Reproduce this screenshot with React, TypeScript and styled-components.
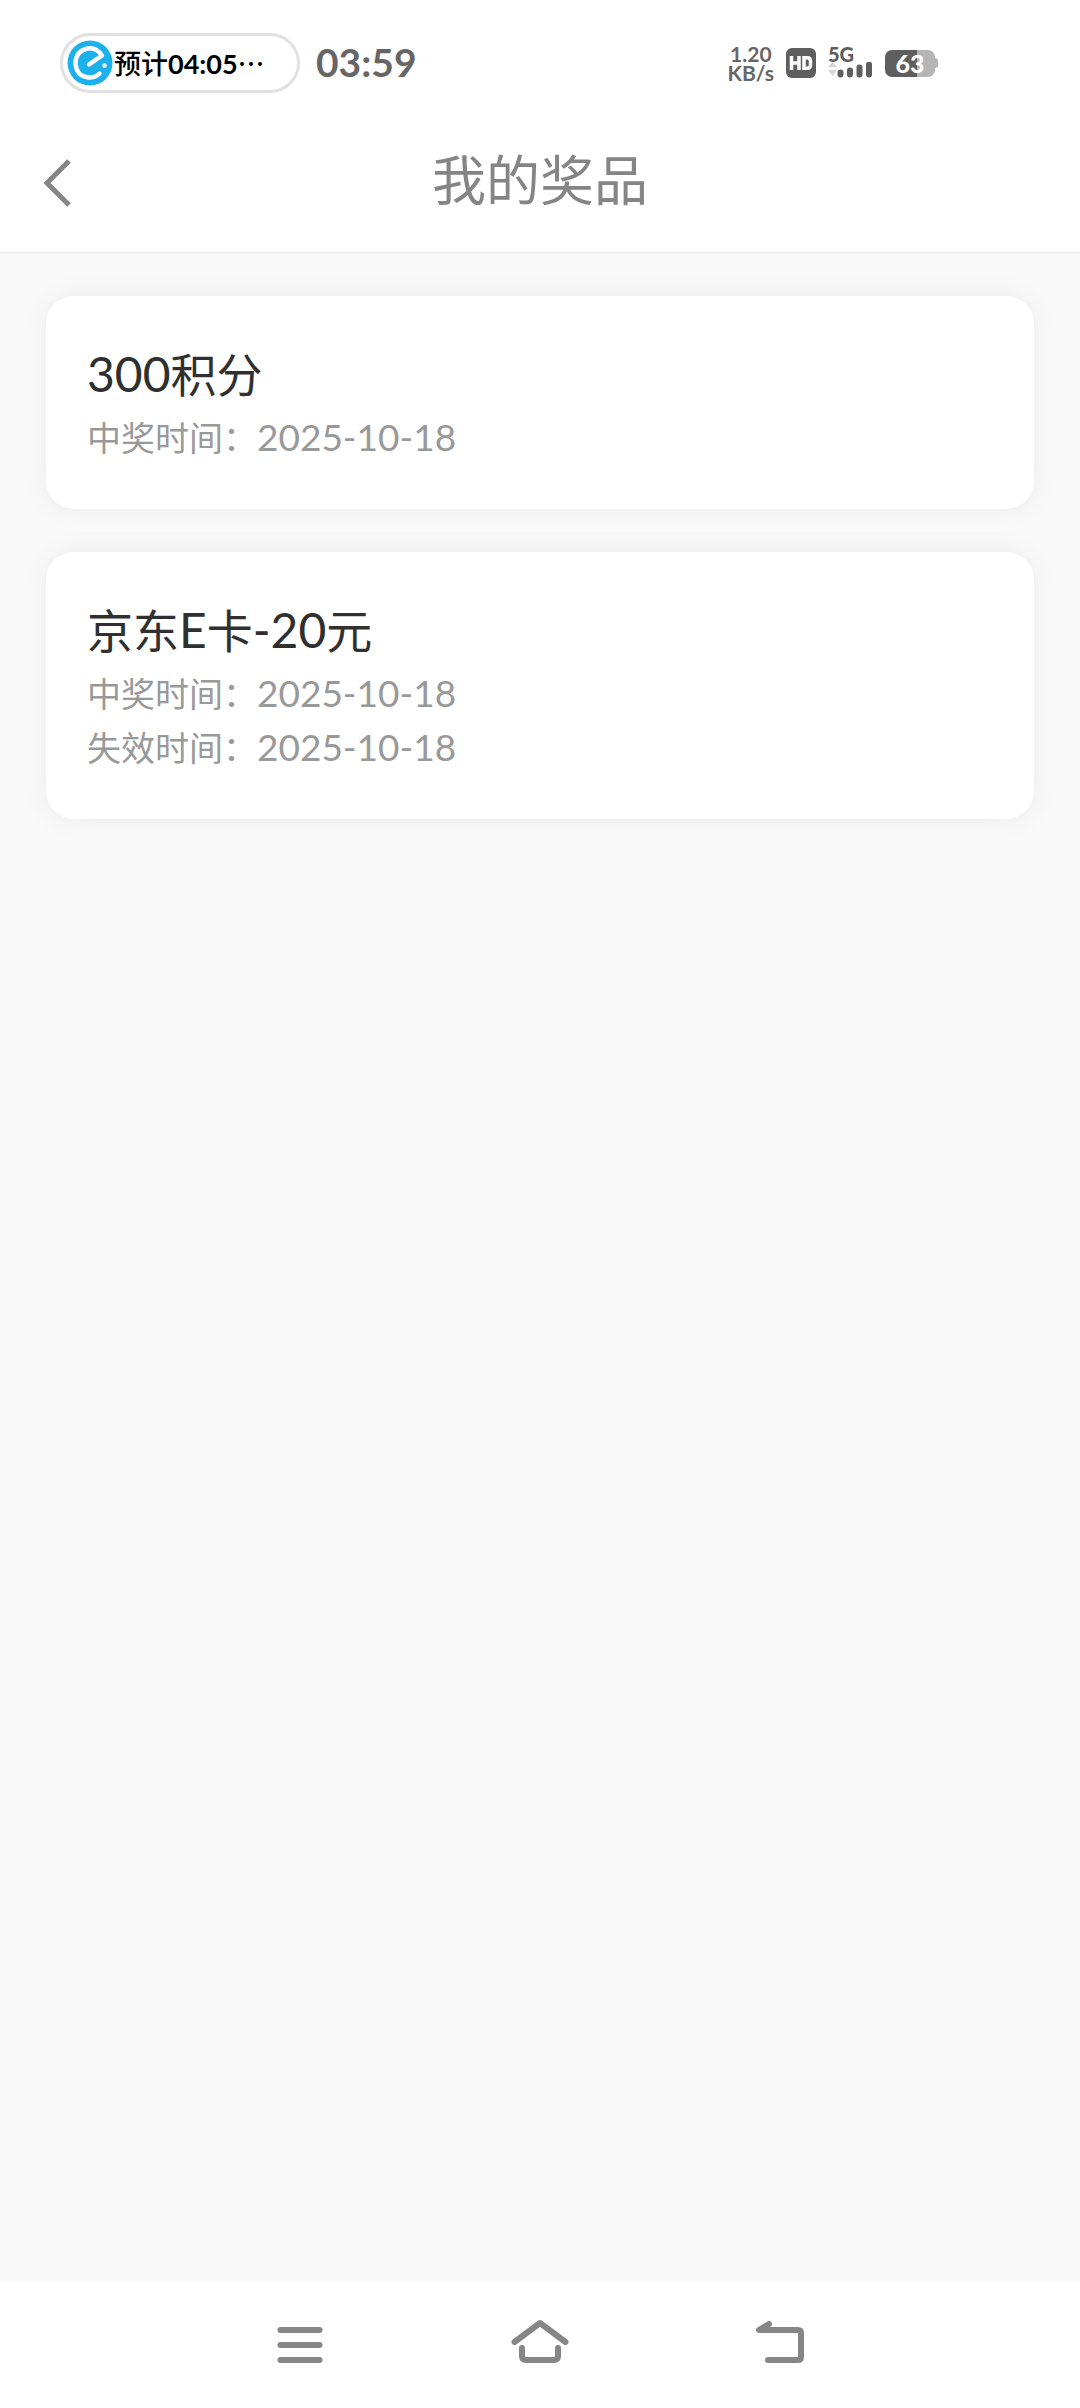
import React from "react";
import styled, { createGlobalStyle } from "styled-components";

const GlobalStyle = createGlobalStyle`
  * { box-sizing: border-box; }
  body {
    margin: 0;
    background: #f9f9f9;
    font-family: "Noto Sans CJK SC", "Noto Sans", sans-serif;
  }
`;

const Page = styled.div`
  min-height: 100vh;
  display: flex;
  flex-direction: column;
`;

const StatusBar = styled.div`
  height: 126px;
  padding: 0 142px 0 60px;
  background: #fff;
  display: flex;
  align-items: center;
  justify-content: space-between;
`;

const StatusGroup = styled.div<{ $gap: number }>`
  display: flex;
  align-items: center;
  gap: ${(p) => p.$gap}px;
`;

const Pill = styled.div`
  height: 60px;
  width: 240px;
  padding-left: 4px;
  border: 3px solid #e2e0e0;
  border-radius: 30px;
  display: flex;
  align-items: center;
  gap: 1px;
  color: #000;
  font-size: 27px;
  line-height: 36px;
  font-weight: 500;
  white-space: nowrap;
`;

const Clock = styled.time`
  padding-bottom: 2px;
  font: 700 39px/46px Lato, sans-serif;
  color: #666;
`;

const Speed = styled.div`
  font: 700 21px/19px Lato, sans-serif;
  text-align: center;
  white-space: pre;
  color: #666;
`;

const Header = styled.header`
  height: 127px;
  padding: 0 39px;
  background: #fff;
  border-bottom: 1px solid #e6e6e6;
  display: grid;
  grid-template-columns: 1fr auto 1fr;
  align-items: start;
`;

const IconButton = styled.button`
  border: 0;
  padding: 0;
  background: none;
  display: flex;
  align-items: center;
  justify-content: center;
  cursor: pointer;
`;

const BackButton = styled(IconButton)`
  width: 36px;
  height: 114px;
`;

const PageTitle = styled.h1`
  margin: 0;
  font-size: 54px;
  line-height: 104px;
  font-weight: 400;
  color: #858585;
`;

const List = styled.main`
  flex: 1;
  padding: 43px 46px;
  display: flex;
  flex-direction: column;
  gap: 43px;
`;

const Card = styled.article`
  padding: 44px 41px 45px;
  border-radius: 28px;
  background: #fff;
  box-shadow: 0 0 28px rgba(0, 0, 0, 0.06);
`;

const Latin = styled.span<{ $size: number; $weight?: number }>`
  font-family: Lato, sans-serif;
  font-size: ${(p) => p.$size}px;
  font-weight: ${(p) => p.$weight ?? 400};
  line-height: 1;
`;

const PrizeName = styled.h2`
  margin: 0 0 6px;
  font-size: 46px;
  line-height: 64px;
  font-weight: 400;
  color: #303030;
`;

const Detail = styled.p`
  margin: 0;
  font-size: 34px;
  line-height: 54px;
  color: #999;
`;

const NavBar = styled.nav`
  height: 126px;
  background: #fff;
  display: flex;
  justify-content: center;
`;

const NavButton = styled(IconButton)`
  width: 240px;
  height: 126px;
`;

const AppLogo = () => (
  <svg width="46" height="46" viewBox="0 0 46 46" fill="none">
    <circle cx="23" cy="23" r="22.5" fill="#1cb0ec" />
    <g stroke="#fff" strokeWidth="4.4" strokeLinecap="round" strokeLinejoin="round">
      <path d="M22 24.5 35 15.500Q29 7 20.500 8.500Q9 11 8.500 23Q9 36 21.500 37.500Q28 38 32.500 33.500" />
      <path d="M37.500 25.500V25.700" />
    </g>
  </svg>
);

const HdIcon = () => (
  <svg width="30" height="30" viewBox="0 0 30 30">
    <rect width="30" height="30" rx="6" fill="#5e5e5e" />
    <g stroke="#fff" strokeWidth="3.500" fill="none">
      <path d="M5.500 8V22M13 8V22M5.500 15H13" />
      <path d="M18 9.700H21.500Q24.500 9.700 24.500 13V17Q24.500 20.300 21.500 20.300H18Z" />
    </g>
  </svg>
);

const SignalWrap = styled.div`
  display: flex;
  flex-direction: column;
  font: 900 20px/16px Lato, sans-serif;
  color: #5e5e5e;
`;

const SignalIcon = () => (
  <svg width="45" height="18" viewBox="0 0 45 18">
    <path d="M0 5 4.500 0 9 5ZM0 8 4.500 14 9 8Z" fill="#d5d5d5" />
    <g stroke="#5e5e5e" strokeWidth="6" strokeLinecap="round">
      <path d="M12.500 10.500V12.500M22 8.500V12.500M31.500 5.500V12.500M41 2.500V12.500" />
    </g>
  </svg>
);

const Battery = styled.div`
  width: 50px;
  height: 27px;
  border-radius: 7px;
  background: linear-gradient(90deg, #5e5e5e 63%, #b5b5b5 63%);
  color: #fff;
  font: 900 25px/27px Lato, sans-serif;
  text-align: center;
`;

const BatteryTip = styled.div`
  width: 3px;
  height: 10px;
  border-radius: 0 3px 3px 0;
  background: #b5b5b5;
`;

const BackIcon = () => (
  <svg width="36" height="50" viewBox="0 0 36 50" fill="none" stroke="#858585" strokeWidth="5">
    <path d="M30 3 8 25 30 47" />
  </svg>
);

const MenuIcon = () => (
  <svg width="60" height="60" viewBox="0 0 60 60" fill="none" stroke="#868686" strokeWidth="6" strokeLinecap="round">
    <path d="M10.500 15H49.500M10.500 30H49.500M10.500 45H49.500" />
  </svg>
);

const HomeIcon = () => (
  <svg width="60" height="60" viewBox="0 0 60 60" fill="none" stroke="#868686" strokeWidth="6" strokeLinecap="round" strokeLinejoin="round">
    <path d="M4.500 27 30 8 55.500 27M12 33V41Q12 45 16 45H44Q48 45 48 41V33" />
  </svg>
);

const ReturnIcon = () => (
  <svg width="60" height="60" viewBox="0 0 60 60" fill="none" stroke="#868686" strokeWidth="6" strokeLinecap="round" strokeLinejoin="round">
    <path d="M19 9 9 15H48Q51 15 51 18V42Q51 45 48 45H18" />
  </svg>
);

type Prize = { name: React.ReactNode; details: { label: string; date: string }[] };

const prizes: Prize[] = [
  {
    name: (
      <>
        <Latin $size={48}>300</Latin>积分
      </>
    ),
    details: [{ label: "中奖时间", date: "2025-10-18" }],
  },
  {
    name: (
      <>
        京东<Latin $size={48}>E</Latin>卡<Latin $size={48}>-20</Latin>元
      </>
    ),
    details: [
      { label: "中奖时间", date: "2025-10-18" },
      { label: "失效时间", date: "2025-10-18" },
    ],
  },
];

export default function App() {
  return (
    <Page>
      <GlobalStyle />
      <StatusBar>
        <StatusGroup $gap={16}>
          <Pill>
            <AppLogo />
            <span>
              预计<Latin $size={27} $weight={700}>04:05</Latin>⋯
            </span>
          </Pill>
          <Clock>03:59</Clock>
        </StatusGroup>
        <StatusGroup $gap={12}>
          <Speed>{"1.20\nKB/s"}</Speed>
          <HdIcon />
          <SignalWrap>
            <span>5G</span>
            <SignalIcon />
          </SignalWrap>
          <StatusGroup $gap={0}>
            <Battery>63</Battery>
            <BatteryTip />
          </StatusGroup>
        </StatusGroup>
      </StatusBar>
      <Header>
        <BackButton aria-label="返回">
          <BackIcon />
        </BackButton>
        <PageTitle>我的奖品</PageTitle>
      </Header>
      <List>
        {prizes.map((prize, i) => (
          <Card key={i}>
            <PrizeName>{prize.name}</PrizeName>
            {prize.details.map((d) => (
              <Detail key={d.label}>
                {d.label}：<Latin $size={37}>{d.date}</Latin>
              </Detail>
            ))}
          </Card>
        ))}
      </List>
      <NavBar>
        <NavButton aria-label="最近任务">
          <MenuIcon />
        </NavButton>
        <NavButton aria-label="主页">
          <HomeIcon />
        </NavButton>
        <NavButton aria-label="返回上一页">
          <ReturnIcon />
        </NavButton>
      </NavBar>
    </Page>
  );
}
